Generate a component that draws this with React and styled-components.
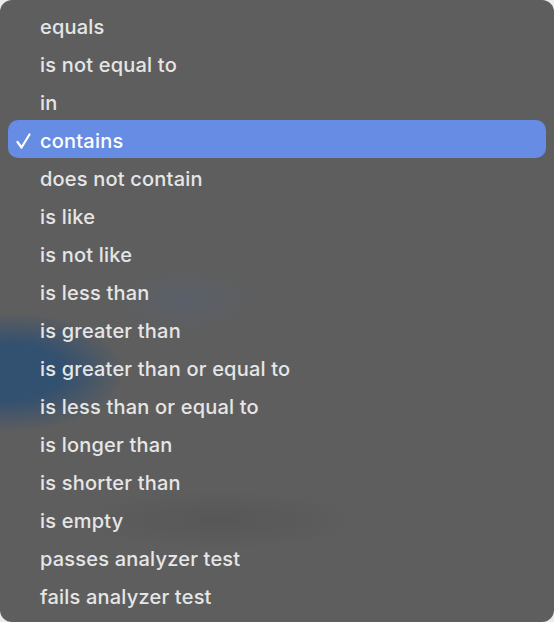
import styled, { createGlobalStyle } from "styled-components";

const GlobalStyle = createGlobalStyle`
  html, body {
    margin: 0;
    padding: 0;
    background: #ececec;
  }
`;

const items = [
  "equals",
  "is not equal to",
  "in",
  "contains",
  "does not contain",
  "is like",
  "is not like",
  "is less than",
  "is greater than",
  "is greater than or equal to",
  "is less than or equal to",
  "is longer than",
  "is shorter than",
  "is empty",
  "passes analyzer test",
  "fails analyzer test",
];

const Menu = styled.div`
  box-sizing: border-box;
  width: 554px;
  height: 622px;
  padding: 8px 8px 6px;
  border-radius: 12px;
  background-color: #5e5e5e;
  background-image: radial-gradient(
      ellipse 115px 60px at 10px 372px,
      rgba(50, 80, 112, 1) 45%,
      rgba(50, 80, 112, 0) 100%
    ),
    radial-gradient(
      ellipse 70px 30px at 185px 300px,
      rgba(85, 98, 118, 0.5),
      rgba(85, 98, 118, 0) 100%
    ),
    radial-gradient(
      ellipse 140px 30px at 220px 520px,
      rgba(70, 70, 70, 0.3),
      rgba(70, 70, 70, 0) 100%
    );
  display: flex;
  flex-direction: column;
  font-family: Inter, "Noto Sans", sans-serif;
`;

const Item = styled.div`
  display: flex;
  align-items: center;
  box-sizing: border-box;
  height: 38px;
  flex-shrink: 0;
  border-radius: 10px;
  padding-left: 8px;
  padding-top: ${(p) => (p.$selected ? "3px" : "0")};
  margin: ${(p) => (p.$selected ? "-2px 0 2px" : "0")};
  font-size: 20px;
  font-weight: 500;
  letter-spacing: 0.2px;
  color: ${(p) => (p.$selected ? "#ffffff" : "#e6e6e6")};
  background: ${(p) => (p.$selected ? "#678ce3" : "transparent")};
`;

const Check = styled.span`
  display: flex;
  width: 24px;
  justify-content: flex-start;
`;

const CheckMark = () => (
  <svg width="15" height="16" viewBox="0 0 15 16">
    <path
      d="M1.5 9 L5.5 14.5 L13.5 1.5"
      fill="none"
      stroke="#fff"
      strokeWidth="2.2"
      strokeLinecap="round"
      strokeLinejoin="round"
    />
  </svg>
);

export default function App() {
  return (
    <>
      <GlobalStyle />
      <Menu>
        {items.map((label) => {
          const selected = label === "contains";
          return (
            <Item key={label} $selected={selected}>
              <Check>{selected && <CheckMark />}</Check>
              {label}
            </Item>
          );
        })}
      </Menu>
    </>
  );
}
